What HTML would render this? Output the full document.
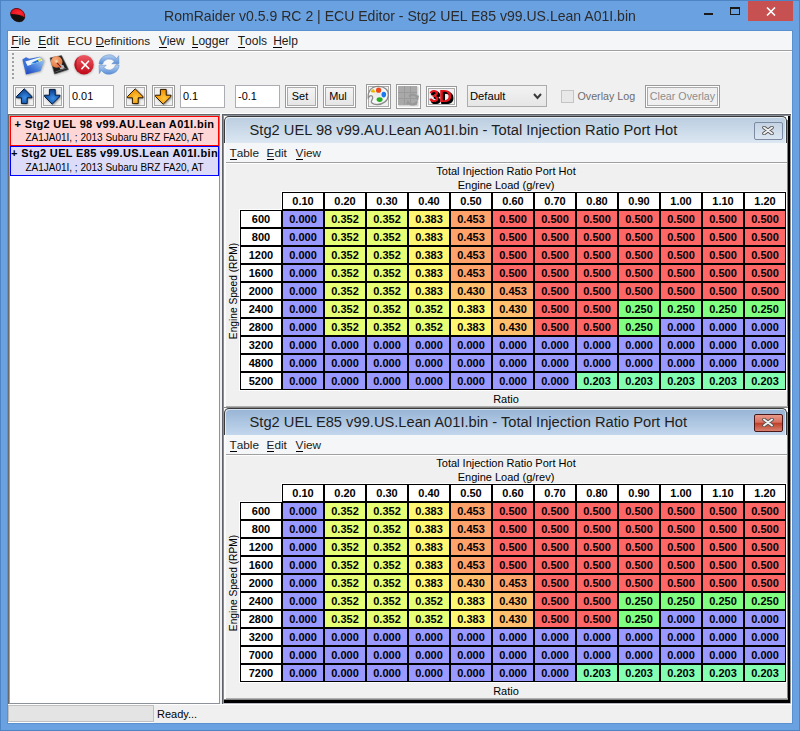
<!DOCTYPE html>
<html><head><meta charset="utf-8"><style>
*{margin:0;padding:0;box-sizing:content-box}
html,body{width:800px;height:731px;overflow:hidden}
body{position:relative;background:#6aa1e0;font-family:"Liberation Sans",sans-serif;color:#000}
.a{position:absolute}
.t{position:absolute;white-space:nowrap}
.tb{position:absolute;border:1px solid #9a9a9a;background:#fff}
.tbi{position:absolute;left:1px;top:1px;border:1px solid #ababab;overflow:hidden}
.tf{position:absolute;border:1px solid #abadb3;background:#fff}
.c{position:absolute;width:40px;height:16px;border:1px solid #000;background:#fff;font-size:11px;font-weight:bold;text-align:center;line-height:17px;color:#000}
u{text-decoration:none;position:relative}
u:after{content:"";position:absolute;left:0;right:0;bottom:0px;height:1px;background:#000}
</style></head><body>

<div class="a" style="left:0;top:0;width:798px;height:729px;border:1px solid #4f84c4"></div>
<svg class="a" style="left:9px;top:7px" width="18" height="17" viewBox="0 0 18 17"><defs><clipPath id="ic"><ellipse cx="8.75" cy="8.15" rx="7.7" ry="6.4" transform="rotate(36 8.75 8.15)"/></clipPath><radialGradient id="ir" cx="0.55" cy="0.55" r="0.6"><stop offset="0" stop-color="#ff2a30"/><stop offset="0.7" stop-color="#e81020"/><stop offset="1" stop-color="#700008"/></radialGradient></defs><g clip-path="url(#ic)"><rect x="0" y="0" width="18" height="17" fill="#151010"/><path d="M0 0 H18 V10.6 L15.6 10.4 Q13 8.2 9.4 7.75 Q6 7.3 2.9 7.1 L0 7 Z" fill="url(#ir)"/></g><ellipse cx="8.75" cy="8.15" rx="7.5" ry="6.2" transform="rotate(36 8.75 8.15)" fill="none" stroke="#2a1010" stroke-width="0.7" opacity="0.7"/></svg>
<div class="t" style="left:0px;top:7.70px;font-size:15px;line-height:15px;width:800px;text-align:center;color:#2b2b2b;transform:scaleX(0.937);transform-origin:399px 0">RomRaider v0.5.9 RC 2 | ECU Editor - Stg2 UEL E85 v99.US.Lean A01I.bin</div>
<div class="a" style="left:704px;top:13px;width:9px;height:2px;background:#1a1a1a;"></div>
<div class="a" style="left:730px;top:7px;width:8px;height:5px;border:1px solid #1a1a1a;border-top-width:2px"></div>
<div class="a" style="left:748px;top:1px;width:45px;height:20px;background:#c75050;"></div>
<svg class="a" style="left:766px;top:7px" width="10" height="9" viewBox="0 0 10 9"><path d="M1 0.5 L9 8.5 M9 0.5 L1 8.5" stroke="#fff" stroke-width="1.6"/></svg>
<div class="a" style="left:7px;top:30px;width:784px;height:692px;border:1px solid #5a8fd0;background:#f0f0f0"></div>
<div class="a" style="left:8px;top:31px;width:784px;height:19px;background:#f5f6f8;"></div>
<div class="a" style="left:8px;top:50px;width:784px;height:1px;background:#a0a0a0;"></div>
<div class="a" style="left:8px;top:51px;width:784px;height:1px;background:#fff;"></div>
<div class="t" style="left:11.2px;top:34.84px;font-size:12px;line-height:12px;color:#1b1b1b"><u>F</u>ile</div>
<div class="t" style="left:38.2px;top:34.84px;font-size:12px;line-height:12px;color:#1b1b1b"><u>E</u>dit</div>
<div class="t" style="left:67.6px;top:35.10px;font-size:11.7px;line-height:11.7px;color:#1b1b1b">ECU <u>D</u>efinitions</div>
<div class="t" style="left:158.7px;top:34.84px;font-size:12px;line-height:12px;color:#1b1b1b"><u>V</u>iew</div>
<div class="t" style="left:191.7px;top:34.84px;font-size:12px;line-height:12px;color:#1b1b1b"><u>L</u>ogger</div>
<div class="t" style="left:237.7px;top:34.84px;font-size:12px;line-height:12px;color:#1b1b1b"><u>T</u>ools</div>
<div class="t" style="left:273.2px;top:34.84px;font-size:12px;line-height:12px;color:#1b1b1b"><u>H</u>elp</div>
<div class="a" style="left:12px;top:53px;width:2px;height:26px;background:repeating-linear-gradient(#a0a0a0 0 2px,transparent 2px 4px)"></div>
<svg class="a" style="left:19px;top:51px" width="28" height="28" viewBox="0 0 28 28"><defs>
<filter id="sh1" x="-20%" y="-20%" width="140%" height="140%"><feGaussianBlur stdDeviation="0.8"/></filter>
<linearGradient id="fo" x1="1" y1="0" x2="0" y2="1"><stop offset="0" stop-color="#9cc8f4"/><stop offset="0.5" stop-color="#4c84dc"/><stop offset="1" stop-color="#1840c0"/></linearGradient></defs>
<path d="M3.4 8.4 L7 6.5 L10 8 L22 5.5 L25.3 9.2 L21.5 19.9 L6.9 23.4 Z" fill="#000" opacity="0.35" filter="url(#sh1)" transform="translate(0.5 0.8)"/>
<path d="M3.4 8.4 L7 6.3 L10.2 7.8 L21 5.8 L22 9.5 L8.5 15 L6.9 23.4 Z" fill="#3a6fd6"/>
<path d="M6.3 10.6 L20.8 6.2 L23.5 9.8 L8.8 15.2 Z" fill="#eef4fb"/>
<path d="M13 11.6 L18.8 8.8 L20.2 10.6 L14.6 12.8 Z" fill="#1e70dc"/>
<path d="M18.6 8.6 L21.5 7.5 L22.6 9.2 L19.8 10.3 Z" fill="#c4e460"/>
<path d="M11.8 12.8 L14.8 11.8 L15.2 13.4 L12.4 14.2 Z" fill="#58c8f4"/>
<path d="M7.7 15.3 L25.3 9.2 L21.5 19.9 L6.9 23.4 Z" fill="url(#fo)"/>
</svg>
<svg class="a" style="left:45px;top:51px" width="28" height="28" viewBox="0 0 28 28"><defs><filter id="sh2" x="-20%" y="-20%" width="140%" height="140%"><feGaussianBlur stdDeviation="0.8"/></filter>
<radialGradient id="pl" cx="0.4" cy="0.35" r="0.7"><stop offset="0" stop-color="#f6b080"/><stop offset="1" stop-color="#e07038"/></radialGradient></defs>
<path d="M5 6.9 L16.5 4.6 L23.4 18.4 L9.6 23 Z" fill="#000" opacity="0.35" filter="url(#sh2)" transform="translate(0.3 0.8)"/>
<path d="M5 6.9 L16.5 4.6 L23.4 18.4 L9.6 23 Z" fill="#1c1c1c" stroke="#5a5a5a" stroke-width="0.6"/>
<circle cx="11.6" cy="10.8" r="5.9" fill="url(#pl)"/>
<path d="M12.5 12.5 L18.5 14.2 L19.8 17.2 L15.5 18.6 Z" fill="#b8b8b8"/>
<path d="M11.8 11.6 L16.2 16.4" stroke="#a01808" stroke-width="1.3"/>
<circle cx="11.6" cy="10.4" r="1.3" fill="#e8d8b0"/>
<path d="M10.2 21 L21.5 17.2" stroke="#606060" stroke-width="0.9"/>
</svg>
<svg class="a" style="left:70px;top:51px" width="28" height="28" viewBox="0 0 28 28"><defs><filter id="sh3" x="-20%" y="-20%" width="140%" height="140%"><feGaussianBlur stdDeviation="0.8"/></filter>
<linearGradient id="rx" x1="0" y1="0" x2="0" y2="1"><stop offset="0" stop-color="#ee5a64"/><stop offset="1" stop-color="#c00818"/></linearGradient></defs>
<circle cx="14.2" cy="14.2" r="9.8" fill="#000" opacity="0.3" filter="url(#sh3)"/>
<circle cx="14" cy="13.7" r="9.7" fill="url(#rx)"/>
<path d="M4.6 13.7 A9.4 9.4 0 0 1 9 5.8 A10 10 0 0 0 6.5 13.7 A10 10 0 0 0 9.5 21.3 A9.4 9.4 0 0 1 4.6 13.7Z" fill="#a0000e" opacity="0.6"/>
<path d="M11.2 10.2 L19.2 17.8 M18.9 9.8 L11.4 18.2" stroke="#fff" stroke-width="1.6"/>
</svg>
<svg class="a" style="left:96px;top:51px" width="28" height="28" viewBox="0 0 28 28"><defs><filter id="sh4" x="-20%" y="-20%" width="140%" height="140%"><feGaussianBlur stdDeviation="0.7"/></filter>
<linearGradient id="rf" x1="0" y1="0" x2="0" y2="1"><stop offset="0" stop-color="#b4d0f0"/><stop offset="1" stop-color="#5a8ed8"/></linearGradient></defs>
<circle cx="13.3" cy="13.6" r="9" fill="#000" opacity="0.18" filter="url(#sh4)"/>
<ellipse cx="13.2" cy="13.6" rx="7" ry="6.2" fill="#f8f8f8"/>
<path d="M3 13 A10 10 0 0 1 20.8 7.6 L22.7 4.6 L23 12.8 L15.8 12.8 L18.4 10.4 A6.8 6.8 0 0 0 6.6 13 Z" fill="url(#rf)" stroke="#5a88c8" stroke-width="0.5"/>
<path d="M23.2 14 A10 10 0 0 1 5.4 19.4 L3.3 22.6 L3 14.2 L10.2 14.2 L7.8 16.6 A6.8 6.8 0 0 0 19.6 14 Z" fill="url(#rf)" stroke="#5a88c8" stroke-width="0.5"/>
</svg>
<div class="tb" style="left:13px;top:85px;width:21px;height:21px"><div class="tbi" style="width:17px;height:17px;background:#f0f0f0"></div></div>
<svg class="a" style="left:13px;top:85px" width="23" height="23" viewBox="0 0 23 23"><defs><radialGradient id="ab1" cx="0.55" cy="0.6" r="0.55"><stop offset="0" stop-color="#3a90ea"/><stop offset="1" stop-color="#0b4290"/></radialGradient><filter id="fab1" x="-30%" y="-30%" width="160%" height="160%"><feGaussianBlur stdDeviation="0.9"/></filter></defs><path d="M11.2 3.8 L19 11.6 L19 12.8 L14.2 12.8 L14.2 18.6 L8.4 18.6 L8.4 12.8 L3.4 12.8 L3.4 11.6 Z" transform="translate(1 1)" fill="#000" opacity="0.45" filter="url(#fab1)"/><path d="M11.2 3.8 L19 11.6 L19 12.8 L14.2 12.8 L14.2 18.6 L8.4 18.6 L8.4 12.8 L3.4 12.8 L3.4 11.6 Z" fill="url(#ab1)" stroke="#021a3e" stroke-width="1" stroke-linejoin="miter"/></svg>
<div class="tb" style="left:41px;top:85px;width:21px;height:21px"><div class="tbi" style="width:17px;height:17px;background:#f0f0f0"></div></div>
<svg class="a" style="left:41px;top:85px" width="23" height="23" viewBox="0 0 23 23"><defs><radialGradient id="ab2" cx="0.55" cy="0.6" r="0.55"><stop offset="0" stop-color="#3a90ea"/><stop offset="1" stop-color="#0b4290"/></radialGradient><filter id="fab2" x="-30%" y="-30%" width="160%" height="160%"><feGaussianBlur stdDeviation="0.9"/></filter></defs><path d="M11.2 19.2 L19 11.4 L19 10.2 L14.2 10.2 L14.2 4.4 L8.4 4.4 L8.4 10.2 L3.4 10.2 L3.4 11.4 Z" transform="translate(1 1)" fill="#000" opacity="0.45" filter="url(#fab2)"/><path d="M11.2 19.2 L19 11.4 L19 10.2 L14.2 10.2 L14.2 4.4 L8.4 4.4 L8.4 10.2 L3.4 10.2 L3.4 11.4 Z" fill="url(#ab2)" stroke="#021a3e" stroke-width="1" stroke-linejoin="miter"/></svg>
<div class="tf" style="left:69px;top:85px;width:43px;height:21px"></div>
<div class="t" style="left:72px;top:90.77px;font-size:10.9px;line-height:10.9px;">0.01</div>
<div class="tb" style="left:124px;top:85px;width:21px;height:21px"><div class="tbi" style="width:17px;height:17px;background:#f0f0f0"></div></div>
<svg class="a" style="left:124px;top:85px" width="23" height="23" viewBox="0 0 23 23"><defs><radialGradient id="ao1" cx="0.55" cy="0.6" r="0.55"><stop offset="0" stop-color="#ffc840"/><stop offset="1" stop-color="#f09000"/></radialGradient><filter id="fao1" x="-30%" y="-30%" width="160%" height="160%"><feGaussianBlur stdDeviation="0.9"/></filter></defs><path d="M11.2 3.8 L19 11.6 L19 12.8 L14.2 12.8 L14.2 18.6 L8.4 18.6 L8.4 12.8 L3.4 12.8 L3.4 11.6 Z" transform="translate(1 1)" fill="#000" opacity="0.45" filter="url(#fao1)"/><path d="M11.2 3.8 L19 11.6 L19 12.8 L14.2 12.8 L14.2 18.6 L8.4 18.6 L8.4 12.8 L3.4 12.8 L3.4 11.6 Z" fill="url(#ao1)" stroke="#2a1800" stroke-width="1" stroke-linejoin="miter"/></svg>
<div class="tb" style="left:152px;top:85px;width:21px;height:21px"><div class="tbi" style="width:17px;height:17px;background:#f0f0f0"></div></div>
<svg class="a" style="left:152px;top:85px" width="23" height="23" viewBox="0 0 23 23"><defs><radialGradient id="ao2" cx="0.55" cy="0.6" r="0.55"><stop offset="0" stop-color="#ffc840"/><stop offset="1" stop-color="#f09000"/></radialGradient><filter id="fao2" x="-30%" y="-30%" width="160%" height="160%"><feGaussianBlur stdDeviation="0.9"/></filter></defs><path d="M11.2 19.2 L19 11.4 L19 10.2 L14.2 10.2 L14.2 4.4 L8.4 4.4 L8.4 10.2 L3.4 10.2 L3.4 11.4 Z" transform="translate(1 1)" fill="#000" opacity="0.45" filter="url(#fao2)"/><path d="M11.2 19.2 L19 11.4 L19 10.2 L14.2 10.2 L14.2 4.4 L8.4 4.4 L8.4 10.2 L3.4 10.2 L3.4 11.4 Z" fill="url(#ao2)" stroke="#2a1800" stroke-width="1" stroke-linejoin="miter"/></svg>
<div class="tf" style="left:180px;top:85px;width:43px;height:21px"></div>
<div class="t" style="left:183px;top:90.77px;font-size:10.9px;line-height:10.9px;">0.1</div>
<div class="tf" style="left:235px;top:85px;width:43px;height:21px"></div>
<div class="t" style="left:238px;top:90.77px;font-size:10.9px;line-height:10.9px;">-0.1</div>
<div class="tb" style="left:285px;top:85px;width:31px;height:21px"><div class="tbi" style="width:27px;height:17px;background:linear-gradient(#f4f4f4,#e6e6e6)"></div></div>
<div class="t" style="left:283.5px;top:90.77px;font-size:10.9px;line-height:10.9px;width:33px;text-align:center;">Set</div>
<div class="tb" style="left:323px;top:85px;width:31px;height:21px"><div class="tbi" style="width:27px;height:17px;background:linear-gradient(#f4f4f4,#e6e6e6)"></div></div>
<div class="t" style="left:321.5px;top:90.77px;font-size:10.9px;line-height:10.9px;width:33px;text-align:center;">Mul</div>
<div class="tb" style="left:366px;top:84px;width:23px;height:23px"><div class="tbi" style="width:19px;height:19px;background:#f0f0f0"></div></div>
<svg class="a" style="left:364px;top:82px" width="28" height="28" viewBox="0 0 28 28"><defs><radialGradient id="pb" cx="0.45" cy="0.4" r="0.6"><stop offset="0" stop-color="#e8e8e8"/><stop offset="0.8" stop-color="#fafafa"/><stop offset="1" stop-color="#d0d0d0"/></radialGradient></defs>
<path d="M14 4.4 C20.5 4.2 24.6 8.2 24.4 13.2 C24.2 18.8 19 22.6 13 22.6 C8.5 22.6 6.4 20.4 7.6 18.6 C8.8 16.8 9.6 14.2 7.2 13.6 C5.6 13.2 4.6 15.5 4.2 16 C3.4 12 5.5 4.6 14 4.4 Z" fill="url(#pb)" stroke="#8a8a8a" stroke-width="1.3"/>
<path d="M6.6 9.8 C7.4 7.6 8.8 7 9.6 7.2 C10.4 7.6 10.6 9 11.4 10 C10 10.8 7.6 10.8 6.6 9.8 Z" fill="#e6b800"/>
<circle cx="14.6" cy="8.2" r="2.6" fill="#f04818"/>
<ellipse cx="19.8" cy="12.6" rx="2.3" ry="2.8" fill="#1a78f0"/>
<ellipse cx="15.6" cy="17.6" rx="3" ry="2.3" fill="#22b022"/>
</svg>
<div class="a" style="left:396px;top:84px;width:23px;height:23px;border:1px solid #9a9a9a;background:#fff"></div>
<svg class="a" style="left:394px;top:82px" width="28" height="28" viewBox="0 0 28 28">
<rect x="4.5" y="4.5" width="20" height="20" fill="#d4d4d4"/>
<rect x="4" y="4" width="19" height="19" fill="#a9a9a9"/>
<path d="M4 10.5H23M4 16.5H23M10.5 4V23M16.5 4V23" stroke="#9a9a9a" stroke-width="1"/>
<path d="M15 14.5 A5 5 0 0 1 23.5 16 L24 13.5 M23 19.5 A5 5 0 0 1 14 20 L13 22.5" fill="none" stroke="#989898" stroke-width="2"/>
</svg>
<div class="tb" style="left:426px;top:86px;width:29px;height:19px"><div class="tbi" style="width:25px;height:15px;background:#f0f0f0"></div></div>
<div class="t" style="left:425.2px;top:88.86px;font-size:16px;line-height:16px;width:31px;text-align:center;font-weight:bold;color:#e4141c;text-shadow:1px 1px 0 #000,1px 2px 0 #000,2px 2px 0 #000;transform:scaleX(1.12);transform-origin:15.5px 0">3D</div>
<div class="a" style="left:467px;top:85px;width:78px;height:20px;border:1px solid #acacac;background:linear-gradient(#f2f2f2,#e6e6e6)"></div>
<div class="t" style="left:470px;top:90.52px;font-size:11.2px;line-height:11.2px;">Default</div>
<svg class="a" style="left:533px;top:93px" width="9" height="7" viewBox="0 0 9 7"><path d="M1 1 L4.5 5 L8 1" stroke="#3a3a3a" stroke-width="2" fill="none"/></svg>
<div class="a" style="left:561px;top:90px;width:11px;height:11px;border:1px solid #c4c4c4;background:#e8e8e8"></div>
<div class="t" style="left:577.5px;top:91.14px;font-size:10.7px;line-height:10.7px;color:#6d6d6d">Overlay Log</div>
<div class="tb" style="left:645px;top:85px;width:73px;height:21px"><div class="tbi" style="width:69px;height:17px;background:#f0f0f0"></div></div>
<div class="t" style="left:645px;top:91.14px;font-size:10.7px;line-height:10.7px;width:75px;text-align:center;color:#8d8d8d">Clear Overlay</div>
<div class="a" style="left:8px;top:113px;width:784px;height:1px;background:#fff;"></div>
<div class="a" style="left:8px;top:114px;width:212px;height:590px;background:#fff;"></div>
<div class="a" style="left:8px;top:114px;width:212px;height:1px;background:#696969;"></div>
<div class="a" style="left:8px;top:114px;width:1px;height:590px;background:#696969;"></div>
<div class="a" style="left:9px;top:115px;width:210px;height:1px;background:#a0a0a0;"></div>
<div class="a" style="left:9px;top:115px;width:1px;height:588px;background:#a0a0a0;"></div>
<div class="a" style="left:219px;top:115px;width:1px;height:589px;background:#8d929a;"></div>
<div class="a" style="left:9px;top:703px;width:211px;height:1px;background:#8d929a;"></div>
<div class="a" style="left:10px;top:116px;width:207px;height:28px;border:1px solid #f00;background:#ffd6d6"></div>
<div class="a" style="left:10px;top:146px;width:207px;height:28px;border:1px solid #00f;background:#dcdcf9"></div>
<div class="t" style="left:10px;top:118.69px;font-size:11px;line-height:11px;width:209px;text-align:center;font-weight:bold;letter-spacing:0.35px">+ Stg2 UEL 98 v99.AU.Lean A01I.bin</div>
<div class="t" style="left:10px;top:133.34px;font-size:10px;line-height:10px;width:209px;text-align:center;">ZA1JA01I, ; 2013 Subaru BRZ FA20, AT</div>
<div class="t" style="left:10px;top:148.49px;font-size:11px;line-height:11px;width:209px;text-align:center;font-weight:bold;letter-spacing:0.35px">+ Stg2 UEL E85 v99.US.Lean A01I.bin</div>
<div class="t" style="left:10px;top:163.34px;font-size:10px;line-height:10px;width:209px;text-align:center;">ZA1JA01I, ; 2013 Subaru BRZ FA20, AT</div>
<div class="a" style="left:222px;top:114px;width:569px;height:590px;background:#f0f0f0;"></div>
<div class="a" style="left:222px;top:114px;width:569px;height:1px;background:#5f6369;"></div>
<div class="a" style="left:222px;top:114px;width:1px;height:590px;background:#5f6369;"></div>
<div class="a" style="left:223px;top:115px;width:567px;height:1px;background:#8a8f96;"></div>
<div class="a" style="left:223px;top:115px;width:1px;height:588px;background:#8a8f96;"></div>
<div class="a" style="left:790px;top:115px;width:1px;height:589px;background:#8a8f96;"></div>
<div class="a" style="left:223px;top:703px;width:568px;height:1px;background:#b8bcc2;"></div>
<div class="a" style="left:791px;top:113px;width:1px;height:591px;background:#fff;"></div>
<div class="a" style="left:224px;top:116px;width:564px;height:292px;background:#f0f0f0;"></div>
<div class="a" style="left:787px;top:120px;width:1px;height:288px;background:linear-gradient(90deg,#9a9a9a,#6a6a6a);"></div>
<div class="a" style="left:788px;top:116px;width:2px;height:295px;background:#000;"></div>
<div class="a" style="left:224px;top:406px;width:564px;height:2px;background:linear-gradient(#c4c4c4,#707070);"></div>
<div class="a" style="left:224px;top:408px;width:566px;height:3px;background:#000;"></div>
<div class="a" style="left:224px;top:143px;width:2px;height:264px;background:#fbfbfb;"></div>
<div class="a" style="left:224px;top:116px;width:4px;height:4px;background:#fff;"></div>
<div class="a" style="left:784px;top:116px;width:4px;height:4px;background:#fff;"></div>
<div class="a" style="left:224px;top:116px;width:561px;height:26px;border:1px solid #3a3a3a;border-bottom:0;border-radius:5px 5px 0 0;background:linear-gradient(#bacde0,#dce7f2);box-shadow:inset 1px 1px 0 rgba(255,255,255,0.6),inset -1px 0 0 rgba(255,255,255,0.6)"></div>
<div class="t" style="left:249.5px;top:123.06px;font-size:14.7px;line-height:14.7px;color:#1e1e1e">Stg2 UEL 98 v99.AU.Lean A01I.bin - Total Injection Ratio Port Hot</div>
<div class="a" style="left:754px;top:122px;width:27px;height:16px;border:1px solid #7c8aa4;border-radius:2px;background:linear-gradient(#c4d3e4,#dbe6f1)"></div>
<svg class="a" style="left:762px;top:126px" width="12" height="9" viewBox="0 0 12 9"><path d="M2 1.5 L10 7.5 M10 1.5 L2 7.5" stroke="#505050" stroke-width="3.6" stroke-linecap="round"/><path d="M2 1.5 L10 7.5 M10 1.5 L2 7.5" stroke="#f0f0f0" stroke-width="2" stroke-linecap="round"/></svg>
<div class="a" style="left:226px;top:143px;width:561px;height:19px;background:#f5f6f8;"></div>
<div class="a" style="left:226px;top:162px;width:561px;height:1px;background:#a0a0a0;"></div>
<div class="a" style="left:226px;top:163px;width:561px;height:1px;background:#fff;"></div>
<div class="t" style="left:229.5px;top:147.91px;font-size:11.8px;line-height:11.8px;color:#1b1b1b"><u>T</u>able</div>
<div class="t" style="left:266.5px;top:147.91px;font-size:11.8px;line-height:11.8px;color:#1b1b1b"><u>E</u>dit</div>
<div class="t" style="left:295.5px;top:147.91px;font-size:11.8px;line-height:11.8px;color:#1b1b1b"><u>V</u>iew</div>
<div class="t" style="left:226px;top:165.99px;font-size:11px;line-height:11px;width:560px;text-align:center;">Total Injection Ratio Port Hot</div>
<div class="t" style="left:226px;top:179.99px;font-size:11px;line-height:11px;width:560px;text-align:center;">Engine Load (g/rev)</div>
<div class="a" style="left:281px;top:191px;width:506px;height:20px;background:#fff;"></div>
<div class="a" style="left:239px;top:209px;width:44px;height:182px;background:#fff;"></div>
<div class="a" style="left:281px;top:209px;width:506px;height:182px;background:#fff;"></div>
<div class="c" style="left:282px;top:192px">0.10</div>
<div class="c" style="left:324px;top:192px">0.20</div>
<div class="c" style="left:366px;top:192px">0.30</div>
<div class="c" style="left:408px;top:192px">0.40</div>
<div class="c" style="left:450px;top:192px">0.50</div>
<div class="c" style="left:492px;top:192px">0.60</div>
<div class="c" style="left:534px;top:192px">0.70</div>
<div class="c" style="left:576px;top:192px">0.80</div>
<div class="c" style="left:618px;top:192px">0.90</div>
<div class="c" style="left:660px;top:192px">1.00</div>
<div class="c" style="left:702px;top:192px">1.10</div>
<div class="c" style="left:744px;top:192px">1.20</div>
<div class="c" style="left:240px;top:210px">600</div>
<div class="c" style="left:282px;top:210px;background:#9999ff">0.000</div>
<div class="c" style="left:324px;top:210px;background:#e6ff75">0.352</div>
<div class="c" style="left:366px;top:210px;background:#e6ff75">0.352</div>
<div class="c" style="left:408px;top:210px;background:#fff672">0.383</div>
<div class="c" style="left:450px;top:210px;background:#ffa36b">0.453</div>
<div class="c" style="left:492px;top:210px;background:#ff6666">0.500</div>
<div class="c" style="left:534px;top:210px;background:#ff6666">0.500</div>
<div class="c" style="left:576px;top:210px;background:#ff6666">0.500</div>
<div class="c" style="left:618px;top:210px;background:#ff6666">0.500</div>
<div class="c" style="left:660px;top:210px;background:#ff6666">0.500</div>
<div class="c" style="left:702px;top:210px;background:#ff6666">0.500</div>
<div class="c" style="left:744px;top:210px;background:#ff6666">0.500</div>
<div class="c" style="left:240px;top:228px">800</div>
<div class="c" style="left:282px;top:228px;background:#9999ff">0.000</div>
<div class="c" style="left:324px;top:228px;background:#e6ff75">0.352</div>
<div class="c" style="left:366px;top:228px;background:#e6ff75">0.352</div>
<div class="c" style="left:408px;top:228px;background:#fff672">0.383</div>
<div class="c" style="left:450px;top:228px;background:#ffa36b">0.453</div>
<div class="c" style="left:492px;top:228px;background:#ff6666">0.500</div>
<div class="c" style="left:534px;top:228px;background:#ff6666">0.500</div>
<div class="c" style="left:576px;top:228px;background:#ff6666">0.500</div>
<div class="c" style="left:618px;top:228px;background:#ff6666">0.500</div>
<div class="c" style="left:660px;top:228px;background:#ff6666">0.500</div>
<div class="c" style="left:702px;top:228px;background:#ff6666">0.500</div>
<div class="c" style="left:744px;top:228px;background:#ff6666">0.500</div>
<div class="c" style="left:240px;top:246px">1200</div>
<div class="c" style="left:282px;top:246px;background:#9999ff">0.000</div>
<div class="c" style="left:324px;top:246px;background:#e6ff75">0.352</div>
<div class="c" style="left:366px;top:246px;background:#e6ff75">0.352</div>
<div class="c" style="left:408px;top:246px;background:#fff672">0.383</div>
<div class="c" style="left:450px;top:246px;background:#ffa36b">0.453</div>
<div class="c" style="left:492px;top:246px;background:#ff6666">0.500</div>
<div class="c" style="left:534px;top:246px;background:#ff6666">0.500</div>
<div class="c" style="left:576px;top:246px;background:#ff6666">0.500</div>
<div class="c" style="left:618px;top:246px;background:#ff6666">0.500</div>
<div class="c" style="left:660px;top:246px;background:#ff6666">0.500</div>
<div class="c" style="left:702px;top:246px;background:#ff6666">0.500</div>
<div class="c" style="left:744px;top:246px;background:#ff6666">0.500</div>
<div class="c" style="left:240px;top:264px">1600</div>
<div class="c" style="left:282px;top:264px;background:#9999ff">0.000</div>
<div class="c" style="left:324px;top:264px;background:#e6ff75">0.352</div>
<div class="c" style="left:366px;top:264px;background:#e6ff75">0.352</div>
<div class="c" style="left:408px;top:264px;background:#fff672">0.383</div>
<div class="c" style="left:450px;top:264px;background:#ffa36b">0.453</div>
<div class="c" style="left:492px;top:264px;background:#ff6666">0.500</div>
<div class="c" style="left:534px;top:264px;background:#ff6666">0.500</div>
<div class="c" style="left:576px;top:264px;background:#ff6666">0.500</div>
<div class="c" style="left:618px;top:264px;background:#ff6666">0.500</div>
<div class="c" style="left:660px;top:264px;background:#ff6666">0.500</div>
<div class="c" style="left:702px;top:264px;background:#ff6666">0.500</div>
<div class="c" style="left:744px;top:264px;background:#ff6666">0.500</div>
<div class="c" style="left:240px;top:282px">2000</div>
<div class="c" style="left:282px;top:282px;background:#9999ff">0.000</div>
<div class="c" style="left:324px;top:282px;background:#e6ff75">0.352</div>
<div class="c" style="left:366px;top:282px;background:#e6ff75">0.352</div>
<div class="c" style="left:408px;top:282px;background:#fff672">0.383</div>
<div class="c" style="left:450px;top:282px;background:#ffbf6d">0.430</div>
<div class="c" style="left:492px;top:282px;background:#ffa36b">0.453</div>
<div class="c" style="left:534px;top:282px;background:#ff6666">0.500</div>
<div class="c" style="left:576px;top:282px;background:#ff6666">0.500</div>
<div class="c" style="left:618px;top:282px;background:#ff6666">0.500</div>
<div class="c" style="left:660px;top:282px;background:#ff6666">0.500</div>
<div class="c" style="left:702px;top:282px;background:#ff6666">0.500</div>
<div class="c" style="left:744px;top:282px;background:#ff6666">0.500</div>
<div class="c" style="left:240px;top:300px">2400</div>
<div class="c" style="left:282px;top:300px;background:#9999ff">0.000</div>
<div class="c" style="left:324px;top:300px;background:#e6ff75">0.352</div>
<div class="c" style="left:366px;top:300px;background:#e6ff75">0.352</div>
<div class="c" style="left:408px;top:300px;background:#e6ff75">0.352</div>
<div class="c" style="left:450px;top:300px;background:#fff672">0.383</div>
<div class="c" style="left:492px;top:300px;background:#ffbf6d">0.430</div>
<div class="c" style="left:534px;top:300px;background:#ff6666">0.500</div>
<div class="c" style="left:576px;top:300px;background:#ff6666">0.500</div>
<div class="c" style="left:618px;top:300px;background:#80ff80">0.250</div>
<div class="c" style="left:660px;top:300px;background:#80ff80">0.250</div>
<div class="c" style="left:702px;top:300px;background:#80ff80">0.250</div>
<div class="c" style="left:744px;top:300px;background:#80ff80">0.250</div>
<div class="c" style="left:240px;top:318px">2800</div>
<div class="c" style="left:282px;top:318px;background:#9999ff">0.000</div>
<div class="c" style="left:324px;top:318px;background:#e6ff75">0.352</div>
<div class="c" style="left:366px;top:318px;background:#e6ff75">0.352</div>
<div class="c" style="left:408px;top:318px;background:#e6ff75">0.352</div>
<div class="c" style="left:450px;top:318px;background:#fff672">0.383</div>
<div class="c" style="left:492px;top:318px;background:#ffbf6d">0.430</div>
<div class="c" style="left:534px;top:318px;background:#ff6666">0.500</div>
<div class="c" style="left:576px;top:318px;background:#ff6666">0.500</div>
<div class="c" style="left:618px;top:318px;background:#80ff80">0.250</div>
<div class="c" style="left:660px;top:318px;background:#9999ff">0.000</div>
<div class="c" style="left:702px;top:318px;background:#9999ff">0.000</div>
<div class="c" style="left:744px;top:318px;background:#9999ff">0.000</div>
<div class="c" style="left:240px;top:336px">3200</div>
<div class="c" style="left:282px;top:336px;background:#9999ff">0.000</div>
<div class="c" style="left:324px;top:336px;background:#9999ff">0.000</div>
<div class="c" style="left:366px;top:336px;background:#9999ff">0.000</div>
<div class="c" style="left:408px;top:336px;background:#9999ff">0.000</div>
<div class="c" style="left:450px;top:336px;background:#9999ff">0.000</div>
<div class="c" style="left:492px;top:336px;background:#9999ff">0.000</div>
<div class="c" style="left:534px;top:336px;background:#9999ff">0.000</div>
<div class="c" style="left:576px;top:336px;background:#9999ff">0.000</div>
<div class="c" style="left:618px;top:336px;background:#9999ff">0.000</div>
<div class="c" style="left:660px;top:336px;background:#9999ff">0.000</div>
<div class="c" style="left:702px;top:336px;background:#9999ff">0.000</div>
<div class="c" style="left:744px;top:336px;background:#9999ff">0.000</div>
<div class="c" style="left:240px;top:354px">4800</div>
<div class="c" style="left:282px;top:354px;background:#9999ff">0.000</div>
<div class="c" style="left:324px;top:354px;background:#9999ff">0.000</div>
<div class="c" style="left:366px;top:354px;background:#9999ff">0.000</div>
<div class="c" style="left:408px;top:354px;background:#9999ff">0.000</div>
<div class="c" style="left:450px;top:354px;background:#9999ff">0.000</div>
<div class="c" style="left:492px;top:354px;background:#9999ff">0.000</div>
<div class="c" style="left:534px;top:354px;background:#9999ff">0.000</div>
<div class="c" style="left:576px;top:354px;background:#9999ff">0.000</div>
<div class="c" style="left:618px;top:354px;background:#9999ff">0.000</div>
<div class="c" style="left:660px;top:354px;background:#9999ff">0.000</div>
<div class="c" style="left:702px;top:354px;background:#9999ff">0.000</div>
<div class="c" style="left:744px;top:354px;background:#9999ff">0.000</div>
<div class="c" style="left:240px;top:372px">5200</div>
<div class="c" style="left:282px;top:372px;background:#9999ff">0.000</div>
<div class="c" style="left:324px;top:372px;background:#9999ff">0.000</div>
<div class="c" style="left:366px;top:372px;background:#9999ff">0.000</div>
<div class="c" style="left:408px;top:372px;background:#9999ff">0.000</div>
<div class="c" style="left:450px;top:372px;background:#9999ff">0.000</div>
<div class="c" style="left:492px;top:372px;background:#9999ff">0.000</div>
<div class="c" style="left:534px;top:372px;background:#9999ff">0.000</div>
<div class="c" style="left:576px;top:372px;background:#84ffb2">0.203</div>
<div class="c" style="left:618px;top:372px;background:#84ffb2">0.203</div>
<div class="c" style="left:660px;top:372px;background:#84ffb2">0.203</div>
<div class="c" style="left:702px;top:372px;background:#84ffb2">0.203</div>
<div class="c" style="left:744px;top:372px;background:#84ffb2">0.203</div>
<div class="t" style="left:226px;top:394.19px;font-size:11px;line-height:11px;width:560px;text-align:center;">Ratio</div>
<div class="t" style="left:133.5px;top:285.0px;width:200px;height:12px;font-size:10.2px;line-height:12px;text-align:center;transform:rotate(-90deg);transform-origin:center;">Engine Speed (RPM)</div>
<div class="a" style="left:224px;top:408px;width:564px;height:292px;background:#f0f0f0;"></div>
<div class="a" style="left:787px;top:412px;width:1px;height:288px;background:linear-gradient(90deg,#9a9a9a,#6a6a6a);"></div>
<div class="a" style="left:788px;top:408px;width:2px;height:295px;background:#000;"></div>
<div class="a" style="left:224px;top:698px;width:564px;height:2px;background:linear-gradient(#c4c4c4,#707070);"></div>
<div class="a" style="left:224px;top:700px;width:566px;height:3px;background:#000;"></div>
<div class="a" style="left:224px;top:435px;width:2px;height:264px;background:#fbfbfb;"></div>
<div class="a" style="left:224px;top:408px;width:4px;height:4px;background:#fff;"></div>
<div class="a" style="left:784px;top:408px;width:4px;height:4px;background:#fff;"></div>
<div class="a" style="left:224px;top:408px;width:561px;height:26px;border:1px solid #3a3a3a;border-bottom:0;border-radius:5px 5px 0 0;background:linear-gradient(#97b4d5,#c3d7ed);box-shadow:inset 1px 1px 0 rgba(255,255,255,0.6),inset -1px 0 0 rgba(255,255,255,0.6)"></div>
<div class="t" style="left:249.5px;top:415.06px;font-size:14.7px;line-height:14.7px;color:#1e1e1e">Stg2 UEL E85 v99.US.Lean A01I.bin - Total Injection Ratio Port Hot</div>
<div class="a" style="left:754px;top:414px;width:27px;height:16px;border:1px solid #4a1818;border-radius:2px;background:linear-gradient(#e89a8a 0%,#d87060 45%,#c04028 52%,#d88070 100%)"></div>
<svg class="a" style="left:762px;top:418px" width="12" height="9" viewBox="0 0 12 9"><path d="M2 1.5 L10 7.5 M10 1.5 L2 7.5" stroke="#505050" stroke-width="3.6" stroke-linecap="round"/><path d="M2 1.5 L10 7.5 M10 1.5 L2 7.5" stroke="#f0f0f0" stroke-width="2" stroke-linecap="round"/></svg>
<div class="a" style="left:226px;top:435px;width:561px;height:19px;background:#f5f6f8;"></div>
<div class="a" style="left:226px;top:454px;width:561px;height:1px;background:#a0a0a0;"></div>
<div class="a" style="left:226px;top:455px;width:561px;height:1px;background:#fff;"></div>
<div class="t" style="left:229.5px;top:439.91px;font-size:11.8px;line-height:11.8px;color:#1b1b1b"><u>T</u>able</div>
<div class="t" style="left:266.5px;top:439.91px;font-size:11.8px;line-height:11.8px;color:#1b1b1b"><u>E</u>dit</div>
<div class="t" style="left:295.5px;top:439.91px;font-size:11.8px;line-height:11.8px;color:#1b1b1b"><u>V</u>iew</div>
<div class="t" style="left:226px;top:457.99px;font-size:11px;line-height:11px;width:560px;text-align:center;">Total Injection Ratio Port Hot</div>
<div class="t" style="left:226px;top:471.99px;font-size:11px;line-height:11px;width:560px;text-align:center;">Engine Load (g/rev)</div>
<div class="a" style="left:281px;top:483px;width:506px;height:20px;background:#fff;"></div>
<div class="a" style="left:239px;top:501px;width:44px;height:182px;background:#fff;"></div>
<div class="a" style="left:281px;top:501px;width:506px;height:182px;background:#fff;"></div>
<div class="c" style="left:282px;top:484px">0.10</div>
<div class="c" style="left:324px;top:484px">0.20</div>
<div class="c" style="left:366px;top:484px">0.30</div>
<div class="c" style="left:408px;top:484px">0.40</div>
<div class="c" style="left:450px;top:484px">0.50</div>
<div class="c" style="left:492px;top:484px">0.60</div>
<div class="c" style="left:534px;top:484px">0.70</div>
<div class="c" style="left:576px;top:484px">0.80</div>
<div class="c" style="left:618px;top:484px">0.90</div>
<div class="c" style="left:660px;top:484px">1.00</div>
<div class="c" style="left:702px;top:484px">1.10</div>
<div class="c" style="left:744px;top:484px">1.20</div>
<div class="c" style="left:240px;top:502px">600</div>
<div class="c" style="left:282px;top:502px;background:#9999ff">0.000</div>
<div class="c" style="left:324px;top:502px;background:#e6ff75">0.352</div>
<div class="c" style="left:366px;top:502px;background:#e6ff75">0.352</div>
<div class="c" style="left:408px;top:502px;background:#fff672">0.383</div>
<div class="c" style="left:450px;top:502px;background:#ffa36b">0.453</div>
<div class="c" style="left:492px;top:502px;background:#ff6666">0.500</div>
<div class="c" style="left:534px;top:502px;background:#ff6666">0.500</div>
<div class="c" style="left:576px;top:502px;background:#ff6666">0.500</div>
<div class="c" style="left:618px;top:502px;background:#ff6666">0.500</div>
<div class="c" style="left:660px;top:502px;background:#ff6666">0.500</div>
<div class="c" style="left:702px;top:502px;background:#ff6666">0.500</div>
<div class="c" style="left:744px;top:502px;background:#ff6666">0.500</div>
<div class="c" style="left:240px;top:520px">800</div>
<div class="c" style="left:282px;top:520px;background:#9999ff">0.000</div>
<div class="c" style="left:324px;top:520px;background:#e6ff75">0.352</div>
<div class="c" style="left:366px;top:520px;background:#e6ff75">0.352</div>
<div class="c" style="left:408px;top:520px;background:#fff672">0.383</div>
<div class="c" style="left:450px;top:520px;background:#ffa36b">0.453</div>
<div class="c" style="left:492px;top:520px;background:#ff6666">0.500</div>
<div class="c" style="left:534px;top:520px;background:#ff6666">0.500</div>
<div class="c" style="left:576px;top:520px;background:#ff6666">0.500</div>
<div class="c" style="left:618px;top:520px;background:#ff6666">0.500</div>
<div class="c" style="left:660px;top:520px;background:#ff6666">0.500</div>
<div class="c" style="left:702px;top:520px;background:#ff6666">0.500</div>
<div class="c" style="left:744px;top:520px;background:#ff6666">0.500</div>
<div class="c" style="left:240px;top:538px">1200</div>
<div class="c" style="left:282px;top:538px;background:#9999ff">0.000</div>
<div class="c" style="left:324px;top:538px;background:#e6ff75">0.352</div>
<div class="c" style="left:366px;top:538px;background:#e6ff75">0.352</div>
<div class="c" style="left:408px;top:538px;background:#fff672">0.383</div>
<div class="c" style="left:450px;top:538px;background:#ffa36b">0.453</div>
<div class="c" style="left:492px;top:538px;background:#ff6666">0.500</div>
<div class="c" style="left:534px;top:538px;background:#ff6666">0.500</div>
<div class="c" style="left:576px;top:538px;background:#ff6666">0.500</div>
<div class="c" style="left:618px;top:538px;background:#ff6666">0.500</div>
<div class="c" style="left:660px;top:538px;background:#ff6666">0.500</div>
<div class="c" style="left:702px;top:538px;background:#ff6666">0.500</div>
<div class="c" style="left:744px;top:538px;background:#ff6666">0.500</div>
<div class="c" style="left:240px;top:556px">1600</div>
<div class="c" style="left:282px;top:556px;background:#9999ff">0.000</div>
<div class="c" style="left:324px;top:556px;background:#e6ff75">0.352</div>
<div class="c" style="left:366px;top:556px;background:#e6ff75">0.352</div>
<div class="c" style="left:408px;top:556px;background:#fff672">0.383</div>
<div class="c" style="left:450px;top:556px;background:#ffa36b">0.453</div>
<div class="c" style="left:492px;top:556px;background:#ff6666">0.500</div>
<div class="c" style="left:534px;top:556px;background:#ff6666">0.500</div>
<div class="c" style="left:576px;top:556px;background:#ff6666">0.500</div>
<div class="c" style="left:618px;top:556px;background:#ff6666">0.500</div>
<div class="c" style="left:660px;top:556px;background:#ff6666">0.500</div>
<div class="c" style="left:702px;top:556px;background:#ff6666">0.500</div>
<div class="c" style="left:744px;top:556px;background:#ff6666">0.500</div>
<div class="c" style="left:240px;top:574px">2000</div>
<div class="c" style="left:282px;top:574px;background:#9999ff">0.000</div>
<div class="c" style="left:324px;top:574px;background:#e6ff75">0.352</div>
<div class="c" style="left:366px;top:574px;background:#e6ff75">0.352</div>
<div class="c" style="left:408px;top:574px;background:#fff672">0.383</div>
<div class="c" style="left:450px;top:574px;background:#ffbf6d">0.430</div>
<div class="c" style="left:492px;top:574px;background:#ffa36b">0.453</div>
<div class="c" style="left:534px;top:574px;background:#ff6666">0.500</div>
<div class="c" style="left:576px;top:574px;background:#ff6666">0.500</div>
<div class="c" style="left:618px;top:574px;background:#ff6666">0.500</div>
<div class="c" style="left:660px;top:574px;background:#ff6666">0.500</div>
<div class="c" style="left:702px;top:574px;background:#ff6666">0.500</div>
<div class="c" style="left:744px;top:574px;background:#ff6666">0.500</div>
<div class="c" style="left:240px;top:592px">2400</div>
<div class="c" style="left:282px;top:592px;background:#9999ff">0.000</div>
<div class="c" style="left:324px;top:592px;background:#e6ff75">0.352</div>
<div class="c" style="left:366px;top:592px;background:#e6ff75">0.352</div>
<div class="c" style="left:408px;top:592px;background:#e6ff75">0.352</div>
<div class="c" style="left:450px;top:592px;background:#fff672">0.383</div>
<div class="c" style="left:492px;top:592px;background:#ffbf6d">0.430</div>
<div class="c" style="left:534px;top:592px;background:#ff6666">0.500</div>
<div class="c" style="left:576px;top:592px;background:#ff6666">0.500</div>
<div class="c" style="left:618px;top:592px;background:#80ff80">0.250</div>
<div class="c" style="left:660px;top:592px;background:#80ff80">0.250</div>
<div class="c" style="left:702px;top:592px;background:#80ff80">0.250</div>
<div class="c" style="left:744px;top:592px;background:#80ff80">0.250</div>
<div class="c" style="left:240px;top:610px">2800</div>
<div class="c" style="left:282px;top:610px;background:#9999ff">0.000</div>
<div class="c" style="left:324px;top:610px;background:#e6ff75">0.352</div>
<div class="c" style="left:366px;top:610px;background:#e6ff75">0.352</div>
<div class="c" style="left:408px;top:610px;background:#e6ff75">0.352</div>
<div class="c" style="left:450px;top:610px;background:#fff672">0.383</div>
<div class="c" style="left:492px;top:610px;background:#ffbf6d">0.430</div>
<div class="c" style="left:534px;top:610px;background:#ff6666">0.500</div>
<div class="c" style="left:576px;top:610px;background:#ff6666">0.500</div>
<div class="c" style="left:618px;top:610px;background:#80ff80">0.250</div>
<div class="c" style="left:660px;top:610px;background:#9999ff">0.000</div>
<div class="c" style="left:702px;top:610px;background:#9999ff">0.000</div>
<div class="c" style="left:744px;top:610px;background:#9999ff">0.000</div>
<div class="c" style="left:240px;top:628px">3200</div>
<div class="c" style="left:282px;top:628px;background:#9999ff">0.000</div>
<div class="c" style="left:324px;top:628px;background:#9999ff">0.000</div>
<div class="c" style="left:366px;top:628px;background:#9999ff">0.000</div>
<div class="c" style="left:408px;top:628px;background:#9999ff">0.000</div>
<div class="c" style="left:450px;top:628px;background:#9999ff">0.000</div>
<div class="c" style="left:492px;top:628px;background:#9999ff">0.000</div>
<div class="c" style="left:534px;top:628px;background:#9999ff">0.000</div>
<div class="c" style="left:576px;top:628px;background:#9999ff">0.000</div>
<div class="c" style="left:618px;top:628px;background:#9999ff">0.000</div>
<div class="c" style="left:660px;top:628px;background:#9999ff">0.000</div>
<div class="c" style="left:702px;top:628px;background:#9999ff">0.000</div>
<div class="c" style="left:744px;top:628px;background:#9999ff">0.000</div>
<div class="c" style="left:240px;top:646px">7000</div>
<div class="c" style="left:282px;top:646px;background:#9999ff">0.000</div>
<div class="c" style="left:324px;top:646px;background:#9999ff">0.000</div>
<div class="c" style="left:366px;top:646px;background:#9999ff">0.000</div>
<div class="c" style="left:408px;top:646px;background:#9999ff">0.000</div>
<div class="c" style="left:450px;top:646px;background:#9999ff">0.000</div>
<div class="c" style="left:492px;top:646px;background:#9999ff">0.000</div>
<div class="c" style="left:534px;top:646px;background:#9999ff">0.000</div>
<div class="c" style="left:576px;top:646px;background:#9999ff">0.000</div>
<div class="c" style="left:618px;top:646px;background:#9999ff">0.000</div>
<div class="c" style="left:660px;top:646px;background:#9999ff">0.000</div>
<div class="c" style="left:702px;top:646px;background:#9999ff">0.000</div>
<div class="c" style="left:744px;top:646px;background:#9999ff">0.000</div>
<div class="c" style="left:240px;top:664px">7200</div>
<div class="c" style="left:282px;top:664px;background:#9999ff">0.000</div>
<div class="c" style="left:324px;top:664px;background:#9999ff">0.000</div>
<div class="c" style="left:366px;top:664px;background:#9999ff">0.000</div>
<div class="c" style="left:408px;top:664px;background:#9999ff">0.000</div>
<div class="c" style="left:450px;top:664px;background:#9999ff">0.000</div>
<div class="c" style="left:492px;top:664px;background:#9999ff">0.000</div>
<div class="c" style="left:534px;top:664px;background:#9999ff">0.000</div>
<div class="c" style="left:576px;top:664px;background:#84ffb2">0.203</div>
<div class="c" style="left:618px;top:664px;background:#84ffb2">0.203</div>
<div class="c" style="left:660px;top:664px;background:#84ffb2">0.203</div>
<div class="c" style="left:702px;top:664px;background:#84ffb2">0.203</div>
<div class="c" style="left:744px;top:664px;background:#84ffb2">0.203</div>
<div class="t" style="left:226px;top:686.19px;font-size:11px;line-height:11px;width:560px;text-align:center;">Ratio</div>
<div class="t" style="left:133.5px;top:577.0px;width:200px;height:12px;font-size:10.2px;line-height:12px;text-align:center;transform:rotate(-90deg);transform-origin:center;">Engine Speed (RPM)</div>
<div class="a" style="left:8px;top:704px;width:784px;height:1px;background:#fff;"></div>
<div class="a" style="left:8px;top:705px;width:144px;height:15px;border:1px solid #c0c0c0;background:#e4e4e4"></div>
<div class="a" style="left:8px;top:722px;width:146px;height:1px;background:#fff;"></div>
<div class="t" style="left:157px;top:708.69px;font-size:11px;line-height:11px;">Ready...</div>
</body></html>
